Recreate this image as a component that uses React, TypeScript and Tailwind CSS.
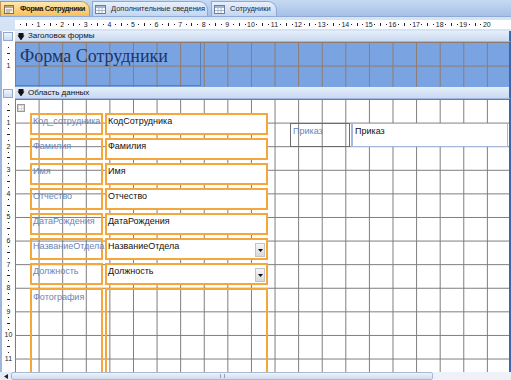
import React from 'react';

const rows: { label: string; field: string; combo?: boolean }[] = [
  { label: 'Код_сотрудника', field: 'КодСотрудника' },
  { label: 'Фамилия', field: 'Фамилия' },
  { label: 'Имя', field: 'Имя' },
  { label: 'Отчество', field: 'Отчество' },
  { label: 'ДатаРождения', field: 'ДатаРождения' },
  { label: 'НазваниеОтдела', field: 'НазваниеОтдела', combo: true },
  { label: 'Должность', field: 'Должность', combo: true },
];

const FormIcon = () => (
  <svg width="10" height="9" viewBox="0 0 10 9" className="shrink-0">
    <rect x="0.5" y="0.5" width="9" height="8" fill="#f4f1ea" stroke="#7b7466" />
    <rect x="1" y="1" width="8" height="2" fill="#c8a66a" />
    <line x1="2" y1="5" x2="8" y2="5" stroke="#9a9080" />
    <line x1="2" y1="7" x2="6" y2="7" stroke="#9a9080" />
  </svg>
);

const TableIcon = () => (
  <svg width="11" height="9" viewBox="0 0 11 9" className="shrink-0">
    <rect x="0.5" y="0.5" width="10" height="8" fill="#ffffff" stroke="#6d7f9c" />
    <rect x="1" y="1" width="9" height="2" fill="#9fb6d8" />
    <line x1="1" y1="5.5" x2="10" y2="5.5" stroke="#a9b6c9" />
    <line x1="4" y1="3" x2="4" y2="8" stroke="#a9b6c9" />
    <line x1="7" y1="3" x2="7" y2="8" stroke="#a9b6c9" />
  </svg>
);

const SectionArrow = () => (
  <svg width="8" height="7" viewBox="0 0 8 7" className="shrink-0">
    <path d="M0 1 L3 1 L3 0 L8 3.5 L3 7 L3 6 L0 6 Z" transform="rotate(90 4 3.5)" fill="#111" />
  </svg>
);

const HRuler = () => (
  <div className="flex h-[9px] items-center pl-[2.95px]">
    {Array.from({ length: 20 }, (_, i) => i + 1).map((n) => (
      <div key={n} className="flex w-[23.6px] shrink-0 items-center">
        <span className="flex w-[5.9px] justify-center"><span className="h-px w-px bg-[#222]" /></span>
        <span className="flex w-[5.9px] justify-center"><span className="h-[3px] w-px bg-[#222]" /></span>
        <span className="flex w-[5.9px] justify-center"><span className="h-px w-px bg-[#222]" /></span>
        <span className="flex w-[5.9px] justify-center text-[7px] leading-none text-[#222]">{n}</span>
      </div>
    ))}
  </div>
);

const VRuler = ({ count }: { count: number }) => (
  <div className="flex flex-col items-center pt-[2.95px]">
    {Array.from({ length: count }, (_, i) => i + 1).map((n) => (
      <div key={n} className="flex h-[23.6px] shrink-0 flex-col items-center">
        <span className="flex h-[5.9px] items-center"><span className="h-px w-px bg-[#222]" /></span>
        <span className="flex h-[5.9px] items-center"><span className="h-px w-[3px] bg-[#222]" /></span>
        <span className="flex h-[5.9px] items-center"><span className="h-px w-px bg-[#222]" /></span>
        <span className="flex h-[5.9px] items-center text-[7px] leading-none text-[#222]">{n}</span>
      </div>
    ))}
  </div>
);

const SectionBar = ({ title, h }: { title: string; h: string }) => (
  <div className={`flex ${h}`}>
    <div className="flex w-[15px] shrink-0 items-center border-l-2 border-[#9cb6dc] bg-white pl-px">
      <div className="h-[9px] w-[10px] border border-[#8fa9d2] bg-[linear-gradient(#eef4fc,#cddcf1)]" />
    </div>
    <div className="flex flex-1 items-center gap-[3px] border-b border-[#9db6da] border-r-2 border-r-[#3f66a8] bg-[linear-gradient(#e6eefa,#c9daf2)] pl-[2px] text-[8px] text-[#111]">
      <SectionArrow />
      <span className="leading-none">{title}</span>
    </div>
  </div>
);

const App: React.FC = () => {
  return (
    <div className="h-[380px] w-[511px] overflow-hidden bg-[#dbe6f4] font-['Liberation_Sans',sans-serif]">
      {/* вкладки */}
      <div className="flex h-[17px] items-end border-b border-[#8eabd6] bg-[linear-gradient(#c6d9f2,#a6c1e7)]">
        <div className="flex h-[15px] w-[90px] shrink-0 items-center gap-[6px] rounded-tr-[9px] border border-b-0 border-[#c3974c] bg-[linear-gradient(#fde8b0,#f8bf58)] pl-[3px]">
          <FormIcon />
          <span className="whitespace-nowrap text-[7.5px] font-bold leading-none tracking-[-0.4px] text-[#1a1a1a]">Форма Сотрудники</span>
        </div>
        <div className="ml-[2px] flex h-[15px] w-[116px] shrink-0 items-center gap-[5px] rounded-tr-[9px] border border-b-0 border-[#8ca9d3] bg-[linear-gradient(#e8f0fb,#c3d6f0)] pl-[2px]">
          <TableIcon />
          <span className="whitespace-nowrap text-[7.5px] leading-none text-[#1e2a3c]">Дополнительные сведения</span>
        </div>
        <div className="ml-[3px] flex h-[15px] w-[66px] shrink-0 items-center gap-[5px] rounded-tr-[9px] border border-b-0 border-[#8ca9d3] bg-[linear-gradient(#e8f0fb,#c3d6f0)] pl-[2px]">
          <TableIcon />
          <span className="whitespace-nowrap text-[7.5px] leading-none text-[#1e2a3c]">Сотрудники</span>
        </div>
      </div>

      {/* линейка */}
      <div className="flex h-[14px] bg-[#d6e3f5]">
        <div className="w-[15px] shrink-0" />
        <div className="mt-[3px] h-[9px] flex-1 overflow-hidden bg-white">
          <HRuler />
        </div>
      </div>

      <SectionBar title="Заголовок формы" h="h-[11px]" />

      {/* заголовок формы */}
      <div className="flex h-[45px]">
        <div className="w-[15px] shrink-0 overflow-hidden border-l-2 border-[#9cb6dc] bg-white">
          <VRuler count={1} />
        </div>
        <div className="flex-1 border-r-2 border-[#3f66a8] bg-[#7aa3e2] bg-[linear-gradient(to_right,#8f7b6e_1px,transparent_1px),linear-gradient(to_bottom,#8f7b6e_1px,transparent_1px)] bg-[size:23.6px_23.6px] pt-px">
          <div className="h-[43px] w-[186px] border-r border-b border-[#5a7fbf] pl-[5px] pt-[3px] font-['Liberation_Serif',serif] text-[18px] leading-[20px] text-[#1c3566]">
            Форма Сотрудники
          </div>
        </div>
      </div>

      <SectionBar title="Область данных" h="h-[12px]" />

      {/* область данных */}
      <div className="flex h-[273px]">
        <div className="w-[15px] shrink-0 overflow-hidden border-l-2 border-[#9cb6dc] bg-white">
          <VRuler count={11} />
        </div>
        <div className="relative flex flex-1 items-start overflow-hidden border-r-2 border-[#3f66a8] bg-white bg-[linear-gradient(to_right,#7c7c7c_1px,transparent_1px),linear-gradient(to_bottom,#7c7c7c_1px,transparent_1px)] bg-[size:23.6px_23.6px] pl-[15px] pt-[14px]">
          <div className="absolute left-[2px] top-[5px] grid h-[8px] w-[8px] grid-cols-2 gap-px border border-[#9a9a9a] bg-[#d6d6d6] p-px">
            <span className="bg-white" />
            <span className="bg-white" />
            <span className="bg-white" />
            <span className="bg-white" />
          </div>

          <div className="flex w-[238px] shrink-0 flex-col gap-[3px]">
            {rows.map((r) => (
              <div key={r.label} className="flex h-[22px] gap-[2px]">
                <div className="w-[73px] shrink-0 border-2 border-[#f5a73b] pl-[1px] pt-[1px] text-[9px] leading-[11px] text-[#6a84b6]">
                  {r.label}
                </div>
                <div className="flex flex-1 border-2 border-[#f5a73b] bg-white pl-[1px] pt-[1px]">
                  <span className="flex-1 text-[9px] leading-[11px] text-[#111]">{r.field}</span>
                  {r.combo && (
                    <span className="mb-px mr-px flex h-[14px] w-[10px] items-center justify-center self-end border border-[#c4c4c4] bg-[linear-gradient(#f6f6f6,#d9d9d9)]">
                      <svg width="5" height="3" viewBox="0 0 5 3"><path d="M0 0 H5 L2.5 3 Z" fill="#111" /></svg>
                    </span>
                  )}
                </div>
              </div>
            ))}
            <div className="flex h-[120px] gap-[2px]">
              <div className="w-[73px] shrink-0 border-2 border-b-0 border-[#f5a73b] pl-[1px] pt-[2px] text-[9px] leading-[11px] text-[#6a84b6]">
                Фотография
              </div>
              <div className="flex-1 border-2 border-b-0 border-[#f5a73b]" />
            </div>
          </div>

          <div className="ml-[22px] mt-[10px] flex shrink-0">
            <div className="h-[24px] w-[60px] border border-[#6d6d6d] pl-[2px] pt-[2px] text-[9px] leading-[11px] text-[#6a84b6]">
              Приказ
            </div>
            <div className="ml-px h-[24px] w-[157px] border border-l-2 border-[#a8b8da] bg-white pl-[2px] pt-[2px] text-[9px] leading-[11px] text-[#111]">
              Приказ
            </div>
          </div>
        </div>
      </div>

      {/* полоса прокрутки */}
      <div className="flex h-[8px] bg-[#eef2f8]">
        <div className="flex w-[11px] items-center justify-center bg-[#e4ebf5]">
          <svg width="4" height="5" viewBox="0 0 4 5"><path d="M4 0 V5 L0 2.5 Z" fill="#222" /></svg>
        </div>
        <div className="flex w-[422px] items-center justify-center rounded-[2px] border border-[#a7b9d3] bg-[linear-gradient(#eef3fa,#cfdbeb)]">
          <span className="h-[4px] w-[5px] border-x border-[#8ea2bf]" />
        </div>
      </div>
    </div>
  );
};

export default App;
